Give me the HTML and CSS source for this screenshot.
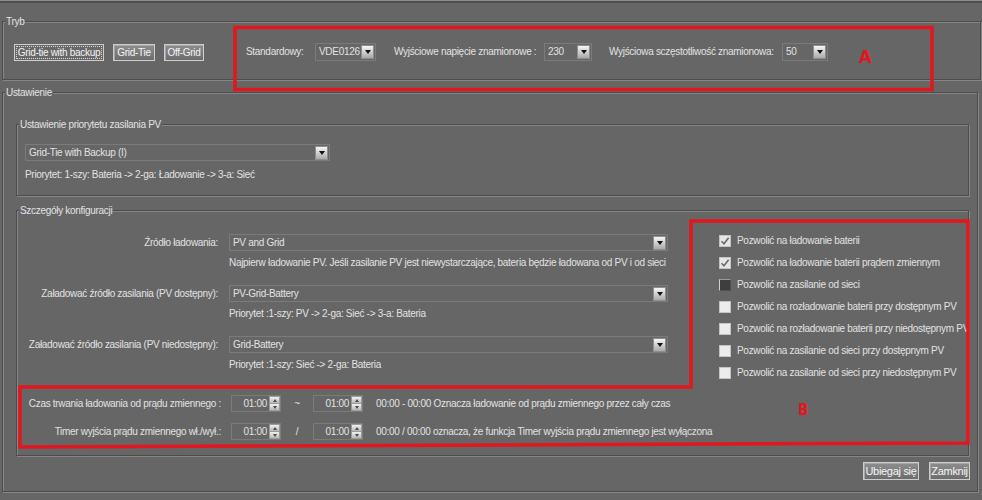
FILE: index.html
```html
<!DOCTYPE html>
<html lang="pl">
<head>
<meta charset="utf-8">
<title>Tryb / Ustawienie</title>
<link rel="stylesheet" href="styles.css">
</head>
<body>
<div class="topbar"></div>

<section class="group tryb">
  <span class="legend">Tryb</span>
  <div class="tryb-row">
    <div class="modes">
      <button class="btn btn-focus w90">Grid-tie with backup</button>
      <button class="btn w42">Grid-Tie</button>
      <button class="btn w40">Off-Grid</button>
    </div>
    <div class="std-fields">
      <span class="lbl-std">Standardowy:</span>
      <div class="combo c61"><span class="val">VDE0126</span><span class="arrow"></span></div>
      <span class="lbl-v">Wyjściowe napięcie znamionowe :</span>
      <div class="combo c48"><span class="val">230</span><span class="arrow"></span></div>
      <span class="lbl-f">Wyjściowa sczęstotliwość znamionowa:</span>
      <div class="combo c46"><span class="val">50</span><span class="arrow"></span></div>
    </div>
  </div>
</section>

<section class="group ust">
  <span class="legend">Ustawienie</span>

  <div class="group prio">
    <span class="legend">Ustawienie priorytetu zasilania PV</span>
    <div class="combo c-prio"><span class="val">Grid-Tie with Backup (I)</span><span class="arrow"></span></div>
    <p class="prio-text">Priorytet: 1-szy: Bateria -&gt; 2-ga: Ładowanie -&gt; 3-a: Sieć</p>
  </div>

  <div class="group cfg">
    <span class="legend">Szczegóły konfiguracji</span>
    <div class="cfg-top">
      <div class="cfg-main">
        <div class="cfg-row">
          <span class="cfg-label">Źródło ładowania:</span>
          <div class="combo c-cfg"><span class="val">PV and Grid</span><span class="arrow"></span></div>
        </div>
        <p class="cfg-desc">Najpierw ładowanie PV. Jeśli zasilanie PV jest niewystarczające, bateria będzie ładowana od PV i od sieci</p>
        <div class="cfg-row">
          <span class="cfg-label">Załadować źródło zasilania (PV dostępny):</span>
          <div class="combo c-cfg"><span class="val">PV-Grid-Battery</span><span class="arrow"></span></div>
        </div>
        <p class="cfg-desc">Priorytet :1-szy: PV -&gt; 2-ga: Sieć -&gt; 3-a: Bateria</p>
        <div class="cfg-row">
          <span class="cfg-label">Załadować źródło zasilania (PV niedostępny):</span>
          <div class="combo c-cfg"><span class="val">Grid-Battery</span><span class="arrow"></span></div>
        </div>
        <p class="cfg-desc">Priorytet :1-szy: Sieć -&gt; 2-ga: Bateria</p>
      </div>
      <ul class="checks">
        <li class="check-row"><span class="cb on"><svg viewBox="0 0 12 12" width="12" height="12"><polyline points="2.5,6.2 5,8.8 9.6,2.8" fill="none" stroke="#6a6a6a" stroke-width="1.6"/></svg></span>Pozwolić na ładowanie baterii</li>
        <li class="check-row"><span class="cb on"><svg viewBox="0 0 12 12" width="12" height="12"><polyline points="2.5,6.2 5,8.8 9.6,2.8" fill="none" stroke="#6a6a6a" stroke-width="1.6"/></svg></span>Pozwolić na ładowanie baterii prądem zmiennym</li>
        <li class="check-row"><span class="cb dark"></span>Pozwolić na zasilanie od sieci</li>
        <li class="check-row"><span class="cb"></span>Pozwolić na rozładowanie baterii przy dostępnym PV</li>
        <li class="check-row"><span class="cb"></span>Pozwolić na rozładowanie baterii przy niedostępnym PV</li>
        <li class="check-row"><span class="cb"></span>Pozwolić na zasilanie od sieci przy dostępnym PV</li>
        <li class="check-row"><span class="cb"></span>Pozwolić na zasilanie od sieci przy niedostępnym PV</li>
      </ul>
    </div>
    <div class="time-rows">
      <div class="time-row">
        <span class="time-label">Czas trwania ładowania od prądu zmiennego :</span>
        <div class="spinner"><span class="sv">01:00</span><span class="spin"><i class="up"></i><i class="dn"></i></span></div>
        <span class="sep">~</span>
        <div class="spinner"><span class="sv">01:00</span><span class="spin"><i class="up"></i><i class="dn"></i></span></div>
        <span class="time-desc">00:00 - 00:00 Oznacza ładowanie od prądu zmiennego przez cały czas</span>
      </div>
      <div class="time-row">
        <span class="time-label">Timer wyjścia prądu zmiennego wł./wył.:</span>
        <div class="spinner"><span class="sv">01:00</span><span class="spin"><i class="up"></i><i class="dn"></i></span></div>
        <span class="sep">/</span>
        <div class="spinner"><span class="sv">01:00</span><span class="spin"><i class="up"></i><i class="dn"></i></span></div>
        <span class="time-desc">00:00 / 00:00 oznacza, że funkcja Timer wyjścia prądu zmiennego jest wyłączona</span>
      </div>
    </div>
  </div>

  <div class="actions">
    <button class="btn btn-big w56">Ubiegaj się</button>
    <button class="btn btn-big w41">Zamknij</button>
  </div>
</section>

<svg class="marks" width="982" height="500" viewBox="0 0 982 500">
  <rect x="235" y="27.5" width="697" height="62" fill="none" stroke="#e3161f" stroke-width="3.5"/>
  <polygon points="691,221 968,221 968,443 20,447 20,387 691,387" fill="none" stroke="#e3161f" stroke-width="3.5" stroke-linejoin="miter"/>
  <text x="859" y="63" class="mark-letter">A</text>
  <text x="798" y="415" class="mark-letter small">B</text>
</svg>
</body>
</html>
```

FILE: styles.css
```css
* { box-sizing: border-box; }
html, body { margin: 0; padding: 0; }
body {
  width: 982px;
  height: 500px;
  overflow: hidden;
  position: relative;
  background: #666666;
  font-family: "Liberation Sans", Arial, sans-serif;
  font-size: 10px;
  line-height: 12px;
  letter-spacing: -0.3px;
  color: #e2e2e2;
}
p { margin: 0; }
ul { margin: 0; padding: 0; list-style: none; }

.topbar {
  height: 3px;
  border-top: 1px solid #8c8c8c;
  background: #4e4e4e;
  margin-bottom: 18px;
}

/* etched group box */
.group {
  position: relative;
  border: 1px solid #4c4c4c;
  box-shadow: inset 1px 1px 0 #868686, 1px 1px 0 #868686;
}
.legend {
  position: absolute;
  top: -6px;
  left: 2px;
  padding: 0 1px;
  background: #666666;
  line-height: 12px;
  white-space: nowrap;
}

/* Tryb */
.tryb {
  margin: 0 1px 0 2px;
  padding: 21px 0 18px 11px;
}
.tryb-row {
  display: flex;
  align-items: center;
  height: 18px;
}
.modes { display: flex; gap: 9px; }

.btn {
  font: inherit;
  letter-spacing: inherit;
  color: #f4f4f4;
  height: 17px;
  padding: 0;
  line-height: 15px;
  text-align: center;
  white-space: nowrap;
  border: 1px solid #cdcdcd;
  background: linear-gradient(#8e8e8e, #6c6c6c);
  box-shadow: inset 1px 1px 0 #a6a6a6;
}
.btn-focus {
  background: #686868;
  box-shadow: none;
  outline: 1px dotted #d8d8d8;
  outline-offset: -3px;
}
.btn-big { font-size: 11px; height: 18px; line-height: 16px; }
.w90 { width: 90px; }
.w42 { width: 42px; }
.w40 { width: 40px; }
.w56 { width: 56px; }
.w41 { width: 41px; }

.std-fields {
  display: flex;
  align-items: center;
  margin-left: 42px;
}
.lbl-std { width: 69px; }
.lbl-v { width: 150px; margin-left: 18px; }
.lbl-f { width: 173px; margin-left: 17px; }

/* combo box */
.combo {
  display: flex;
  align-items: center;
  height: 18px;
  border: 1px solid #7b7b7b;
  background: #666666;
}
.combo .val {
  flex: 1;
  padding-left: 3px;
  white-space: nowrap;
  overflow: hidden;
}
.arrow {
  width: 13px;
  height: 14px;
  margin-right: 1px;
  display: flex;
  align-items: center;
  justify-content: center;
  background: linear-gradient(#f6f6f6, #a9a9a9);
  border: 1px solid #8e8e8e;
}
.arrow::before {
  content: "";
  border-left: 3.5px solid transparent;
  border-right: 3.5px solid transparent;
  border-top: 4px solid #111;
}
.c61 { width: 61px; }
.c48 { width: 48px; }
.c46 { width: 46px; }
.c-prio { width: 305px; height: 17px; }
.c-cfg { width: 439px; height: 17px; }

/* Ustawienie */
.ust {
  margin: 12px 4px 0 2px;
  padding: 31px 8px 11px 13px;
}
.prio {
  padding: 19px 8px 14px 8px;
}
.prio-text { margin-top: 8px; }

.cfg {
  margin-top: 14px;
  padding: 19px 8px 15px 8px;
}
.cfg-top {
  display: flex;
  align-items: flex-start;
}
.cfg-main {
  width: 643px;
  padding-top: 4px;
}
.cfg-row {
  display: flex;
  align-items: center;
}
.cfg-label {
  width: 193px;
  margin-right: 11px;
  text-align: right;
  white-space: nowrap;
}
.cfg-desc {
  margin: 6px 0 16px 204px;
  white-space: nowrap;
}
.cfg-desc:last-child { margin-bottom: 0; }

.checks {
  margin-left: 51px;
  display: flex;
  flex-direction: column;
}
.check-row {
  height: 22px;
  display: flex;
  align-items: center;
  gap: 6px;
  white-space: nowrap;
}
.cb {
  width: 12px;
  height: 12px;
  flex: none;
  background: #ececec;
  border: 1px solid #c4c4c4;
  display: flex;
}
.cb svg { display: block; margin: -1px; }
.cb.on { background: #e6e6e6; }
.cb.dark {
  background: #3e3e3e;
  border-color: #9a9a9a #505050 #505050 #d0d0d0;
}

/* time rows */
.time-rows {
  margin-top: 11px;
  display: flex;
  flex-direction: column;
  gap: 11px;
}
.time-row {
  display: flex;
  align-items: center;
  height: 17px;
  white-space: nowrap;
}
.time-label {
  width: 196px;
  margin-right: 10px;
  text-align: right;
}
.spinner {
  width: 50px;
  height: 17px;
  display: flex;
  border: 1px solid #7b7b7b;
}
.sv {
  flex: 1;
  text-align: right;
  padding-right: 2px;
  line-height: 15px;
}
.spin {
  width: 11px;
  display: flex;
  flex-direction: column;
}
.spin i {
  flex: 1;
  display: flex;
  align-items: center;
  justify-content: center;
  background: linear-gradient(#f2f2f2, #b8b8b8);
  border: 1px solid #9a9a9a;
}
.spin i.dn { border-top: none; }
.spin i.up::before {
  content: "";
  border-left: 2.5px solid transparent;
  border-right: 2.5px solid transparent;
  border-bottom: 3px solid #4a4a4a;
}
.spin i.dn::before {
  content: "";
  border-left: 2.5px solid transparent;
  border-right: 2.5px solid transparent;
  border-top: 3px solid #4a4a4a;
}
.sep {
  width: 32px;
  text-align: center;
}
.time-desc { margin-left: 13px; }

.actions {
  display: flex;
  justify-content: flex-end;
  gap: 10px;
  margin-top: 6px;
  margin-right: -1px;
}

/* red annotations drawn over the screenshot */
.marks {
  position: absolute;
  left: 0;
  top: 0;
  pointer-events: none;
}
.mark-letter {
  font-family: "DejaVu Sans Condensed", "DejaVu Sans", sans-serif;
  font-weight: bold;
  font-size: 18px;
  fill: #e3161f;
  letter-spacing: 0;
}
.mark-letter.small { font-size: 15px; }
```
